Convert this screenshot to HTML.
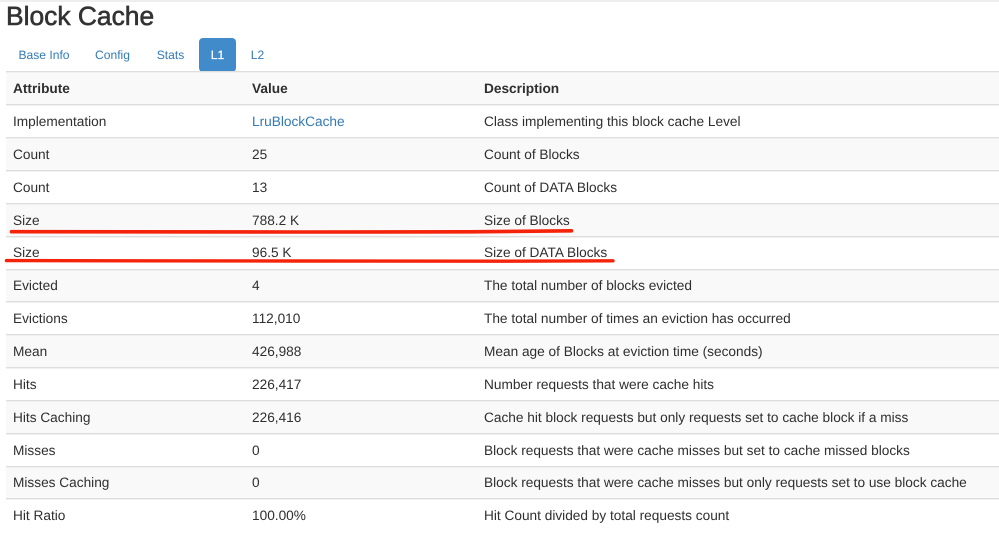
<!DOCTYPE html>
<html>
<head>
<meta charset="utf-8">
<style>
html,body{margin:0;padding:0;background:#fff;}
body{width:999px;height:533px;overflow:hidden;position:relative;font-family:"Liberation Sans",Arial,sans-serif;color:#333;font-size:14px;text-rendering:geometricPrecision;}
.topbar{position:absolute;left:0;top:0;width:999px;height:2px;background:#eee;}
h1{position:absolute;left:6px;top:0;margin:0;font-size:26.4px;line-height:32px;font-weight:400;color:#333;white-space:nowrap;-webkit-text-stroke:.6px #333;}
.tab{position:absolute;top:38px;height:34px;line-height:35px;font-size:12.1px;color:#337ab7;text-align:center;white-space:nowrap;}
.tab.on{background:#428bca;color:#fff;border-radius:4px;-webkit-text-stroke:.25px #fff;}
.line{position:absolute;left:6px;width:993px;height:1px;background:#dedede;box-shadow:0 1px 0 #f0f0f0;}
.row{position:absolute;left:6px;width:993px;height:32px;}
.row.s{background:#f9f9f9;}
.t{position:absolute;font-size:13.66px;line-height:20px;white-space:nowrap;color:#2f2f2f;}
.b{font-weight:700;}
.a{color:#337ab7;}
svg{position:absolute;left:0;top:0;}
</style>
</head>
<body>
<div class="topbar"></div>
<h1>Block Cache</h1>

<div class="tab" style="left:6px;width:76px;">Base Info</div>
<div class="tab" style="left:82px;width:61px;">Config</div>
<div class="tab" style="left:144px;width:53px;">Stats</div>
<div class="tab on" style="left:199px;width:37px;height:34px;">L1</div>
<div class="tab" style="left:238px;width:39px;">L2</div>

<div class="row s" style="top:72px;"></div>
<div class="row s" style="top:138px;"></div>
<div class="row s" style="top:204px;"></div>
<div class="row s" style="top:270px;"></div>
<div class="row s" style="top:335px;"></div>
<div class="row s" style="top:401px;"></div>
<div class="row s" style="top:467px;"></div>

<div class="line" style="top:71px;"></div>
<div class="line" style="top:104px;"></div>
<div class="line" style="top:137px;"></div>
<div class="line" style="top:170px;"></div>
<div class="line" style="top:203px;"></div>
<div class="line" style="top:236px;"></div>
<div class="line" style="top:269px;"></div>
<div class="line" style="top:301px;"></div>
<div class="line" style="top:334px;"></div>
<div class="line" style="top:367px;"></div>
<div class="line" style="top:400px;"></div>
<div class="line" style="top:433px;"></div>
<div class="line" style="top:466px;"></div>
<div class="line" style="top:498px;"></div>

<div class="t b" style="left:13px;top:79px;">Attribute</div>
<div class="t b" style="left:252px;top:79px;">Value</div>
<div class="t b" style="left:484px;top:79px;">Description</div>

<div class="t" style="left:13px;top:112px;">Implementation</div>
<div class="t a" style="left:252px;top:112px;">LruBlockCache</div>
<div class="t" style="left:484px;top:112px;">Class implementing this block cache Level</div>

<div class="t" style="left:13px;top:145px;">Count</div>
<div class="t" style="left:252px;top:145px;">25</div>
<div class="t" style="left:484px;top:145px;">Count of Blocks</div>

<div class="t" style="left:13px;top:178px;">Count</div>
<div class="t" style="left:252px;top:178px;">13</div>
<div class="t" style="left:484px;top:178px;">Count of DATA Blocks</div>

<div class="t" style="left:13px;top:211px;">Size</div>
<div class="t" style="left:252px;top:211px;">788.2 K</div>
<div class="t" style="left:484px;top:211px;">Size of Blocks</div>

<div class="t" style="left:13px;top:243px;">Size</div>
<div class="t" style="left:252px;top:243px;">96.5 K</div>
<div class="t" style="left:484px;top:243px;">Size of DATA Blocks</div>

<div class="t" style="left:13px;top:276px;">Evicted</div>
<div class="t" style="left:252px;top:276px;">4</div>
<div class="t" style="left:484px;top:276px;">The total number of blocks evicted</div>

<div class="t" style="left:13px;top:309px;">Evictions</div>
<div class="t" style="left:252px;top:309px;">112,010</div>
<div class="t" style="left:484px;top:309px;">The total number of times an eviction has occurred</div>

<div class="t" style="left:13px;top:342px;">Mean</div>
<div class="t" style="left:252px;top:342px;">426,988</div>
<div class="t" style="left:484px;top:342px;">Mean age of Blocks at eviction time (seconds)</div>

<div class="t" style="left:13px;top:375px;">Hits</div>
<div class="t" style="left:252px;top:375px;">226,417</div>
<div class="t" style="left:484px;top:375px;">Number requests that were cache hits</div>

<div class="t" style="left:13px;top:408px;">Hits Caching</div>
<div class="t" style="left:252px;top:408px;">226,416</div>
<div class="t" style="left:484px;top:408px;">Cache hit block requests but only requests set to cache block if a miss</div>

<div class="t" style="left:13px;top:441px;">Misses</div>
<div class="t" style="left:252px;top:441px;">0</div>
<div class="t" style="left:484px;top:441px;">Block requests that were cache misses but set to cache missed blocks</div>

<div class="t" style="left:13px;top:473px;">Misses Caching</div>
<div class="t" style="left:252px;top:473px;">0</div>
<div class="t" style="left:484px;top:473px;">Block requests that were cache misses but only requests set to use block cache</div>

<div class="t" style="left:13px;top:506px;">Hit Ratio</div>
<div class="t" style="left:252px;top:506px;">100.00%</div>
<div class="t" style="left:484px;top:506px;">Hit Count divided by total requests count</div>

<svg width="999" height="533" viewBox="0 0 999 533">
<path d="M11.5 231.7 L300 232 L470 231.8 L571.5 230.8" fill="none" stroke="#f5230a" stroke-width="3.6" stroke-linecap="round"/>
<path d="M6.5 260.6 L300 261 L500 261.2 L613 260.8" fill="none" stroke="#f5230a" stroke-width="3.4" stroke-linecap="round"/>
</svg>
</body>
</html>
